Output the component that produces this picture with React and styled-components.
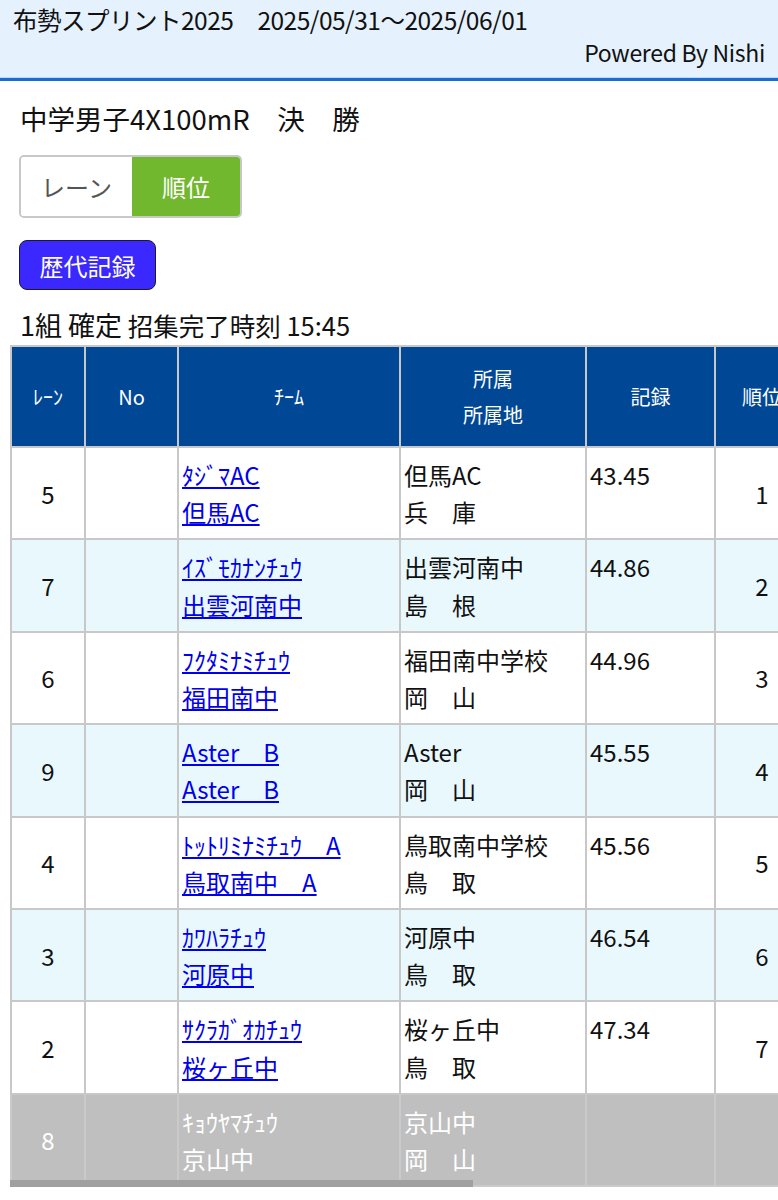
import React from 'react';
import styled, { createGlobalStyle } from 'styled-components';

const GlobalStyle = createGlobalStyle`
  body {
    margin: 0;
    background: #fff;
    font-family: "Noto Sans CJK JP", "Noto Sans", sans-serif;
    color: #111;
  }
`;

const Header = styled.header`
  background: #e5f2fe;
  height: 81px;
  padding: 3px 13px 0;
  box-sizing: border-box;
  border-bottom: 3px solid #1a6bd4;
  box-shadow: inset 0 -1px 0 #bcd9f7;
`;

const HeaderTitle = styled.div`
  font-size: 24.5px;
  line-height: 33px;
  letter-spacing: -0.5px;
`;

const Powered = styled.div`
  font-size: 23px;
  line-height: 32px;
  text-align: right;
  letter-spacing: -0.3px;
`;

const Main = styled.main`
  padding: 19px 0 0 19px;
`;

const Title = styled.h1`
  margin: 0 0 19px 1px;
  font-size: 27.5px;
  font-weight: 400;
  line-height: 36px;
`;

const Toggle = styled.div`
  display: inline-flex;
  border: 2px solid #c6c8cc;
  border-radius: 5px;
  overflow: hidden;
  height: 63px;
  box-sizing: border-box;
`;

const ToggleItem = styled.div`
  width: ${p => p.$w}px;
  display: flex;
  align-items: center;
  justify-content: center;
  font-size: 24px;
  background: ${p => (p.$active ? '#72b82e' : '#fff')};
  color: ${p => (p.$active ? '#fff' : '#555')};
`;

const RecordButton = styled.button`
  display: block;
  margin-top: 22px;
  width: 137px;
  height: 50px;
  background: #3b28ff;
  color: #fff;
  border: 1.5px solid #1a1a2a;
  border-radius: 8px;
  font-family: inherit;
  font-size: 24px;
  padding: 0;
`;

const Status = styled.div`
  margin-top: 17px;
  font-size: 25.5px;
  line-height: 36px;
  margin-left: 1px;
  span {
    font-size: 27px;
  }
`;

const TableWrap = styled.div`
  position: relative;
  margin: 2px 0 0 10px;
  overflow: hidden;
`;

const Thumb = styled.div`
  position: absolute;
  left: 0;
  bottom: 0;
  width: 463px;
  height: 7px;
  background: #a0a0a0;
`;

const Table = styled.table`
  border-collapse: collapse;
  table-layout: fixed;
  width: 1280px;
`;

const Th = styled.th`
  background: #004896;
  color: #fff;
  font-weight: 400;
  font-size: 20px;
  line-height: 36px;
  height: 99px;
  padding: 0;
  border: 2px solid #c8c8c8;
  text-align: center;
`;

const Row = styled.tr`
  background: ${p => (p.$dim ? '#bfbfbf' : p.$alt ? '#e9f8fd' : '#fff')};
  color: ${p => (p.$dim ? '#fff' : '#111')};
  td {
    border-color: ${p => (p.$dim ? '#cacaca' : '#c8c8c8')};
  }
`;

const Td = styled.td`
  border: 2px solid #c8c8c8;
  padding: 8px 3px;
  font-size: 24px;
  line-height: 37.2px;
  vertical-align: ${p => (p.$top ? 'top' : 'middle')};
  text-align: ${p => p.$align || 'left'};
  white-space: nowrap;
`;

const Team = styled.a`
  display: block;
  color: ${p => (p.$plain ? '#fff' : '#0000ee')};
  text-decoration: ${p => (p.$plain ? 'none' : 'underline')};
  text-underline-offset: 2px;
  width: fit-content;
`;

const rows = [
  { lane: 5, kana: 'ﾀｼﾞﾏAC', name: '但馬AC', club: '但馬AC', pref: '兵　庫', time: '43.45', rank: 1 },
  { lane: 7, kana: 'ｲｽﾞﾓｶﾅﾝﾁｭｳ', name: '出雲河南中', club: '出雲河南中', pref: '島　根', time: '44.86', rank: 2 },
  { lane: 6, kana: 'ﾌｸﾀﾐﾅﾐﾁｭｳ', name: '福田南中', club: '福田南中学校', pref: '岡　山', time: '44.96', rank: 3 },
  { lane: 9, kana: 'Aster　B', name: 'Aster　B', club: 'Aster', pref: '岡　山', time: '45.55', rank: 4 },
  { lane: 4, kana: 'ﾄｯﾄﾘﾐﾅﾐﾁｭｳ　A', name: '鳥取南中　A', club: '鳥取南中学校', pref: '鳥　取', time: '45.56', rank: 5 },
  { lane: 3, kana: 'ｶﾜﾊﾗﾁｭｳ', name: '河原中', club: '河原中', pref: '鳥　取', time: '46.54', rank: 6 },
  { lane: 2, kana: 'ｻｸﾗｶﾞｵｶﾁｭｳ', name: '桜ヶ丘中', club: '桜ヶ丘中', pref: '鳥　取', time: '47.34', rank: 7 },
  { lane: 8, kana: 'ｷｮｳﾔﾏﾁｭｳ', name: '京山中', club: '京山中', pref: '岡　山', time: '', rank: '', dim: true },
];

export default function App() {
  return (
    <>
      <GlobalStyle />
      <Header>
        <HeaderTitle>布勢スプリント2025　2025/05/31～2025/06/01</HeaderTitle>
        <Powered>Powered By Nishi</Powered>
      </Header>
      <Main>
        <Title>中学男子4X100mR　決　勝</Title>
        <Toggle>
          <ToggleItem $w={111}>レーン</ToggleItem>
          <ToggleItem $w={108} $active>順位</ToggleItem>
        </Toggle>
        <RecordButton>歴代記録</RecordButton>
        <Status>
          <span>1組 確定</span> 招集完了時刻 15:45
        </Status>
      </Main>
      <TableWrap>
        <Table>
          <colgroup>
            <col style={{ width: 74 }} />
            <col style={{ width: 93 }} />
            <col style={{ width: 222 }} />
            <col style={{ width: 186 }} />
            <col style={{ width: 129 }} />
            <col style={{ width: 94 }} />
            <col style={{ width: 160 }} />
            <col style={{ width: 160 }} />
            <col style={{ width: 162 }} />
          </colgroup>
          <thead>
            <tr>
              <Th>ﾚｰﾝ</Th>
              <Th>No</Th>
              <Th>ﾁｰﾑ</Th>
              <Th>所属<br />所属地</Th>
              <Th>記録</Th>
              <Th>順位</Th>
              <Th>備考</Th>
              <Th>大会記録</Th>
              <Th>ﾒﾝﾊﾞｰ</Th>
            </tr>
          </thead>
          <tbody>
            {rows.map((r, i) => (
              <Row key={i} $alt={i % 2 === 1} $dim={r.dim}>
                <Td $align="center">{r.lane}</Td>
                <Td></Td>
                <Td>
                  <Team href="#" $plain={r.dim}>{r.kana}</Team>
                  <Team href="#" $plain={r.dim}>{r.name}</Team>
                </Td>
                <Td>
                  {r.club}
                  <br />
                  {r.pref}
                </Td>
                <Td $top>{r.time}</Td>
                <Td $align="center">{r.rank}</Td>
                <Td></Td>
                <Td></Td>
                <Td></Td>
              </Row>
            ))}
          </tbody>
        </Table>
        <Thumb />
      </TableWrap>
    </>
  );
}
